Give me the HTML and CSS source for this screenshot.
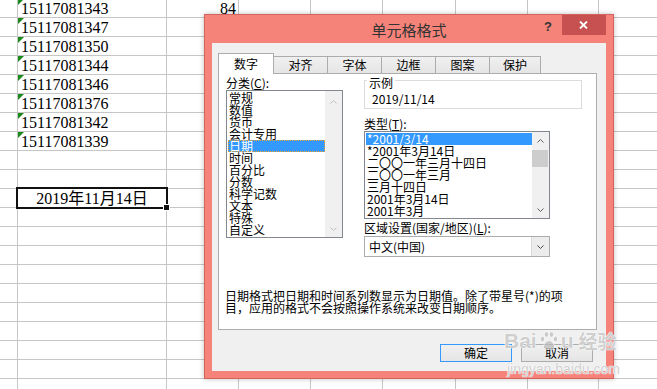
FILE: index.html
```html
<!DOCTYPE html>
<html lang="zh">
<head>
  <meta charset="UTF-8">
  <meta name="viewport" content="width=device-width, initial-scale=1.0">
  <title>单元格格式</title>
  <link rel="stylesheet" href="styles.css">
</head>
<body>
  <div class="sheet" id="sheet"></div>

  <div class="dialog">
    <div class="titlebar">
      <span></span>
      <div class="title">单元格格式</div>
      <div class="title-btns">
        <span class="help">?</span>
        <span class="close">
          <svg width="9" height="8" viewBox="0 0 9 8"><path d="M1 0.5L8 7.5M8 0.5L1 7.5" stroke="#fff" stroke-width="1.8"/></svg>
        </span>
      </div>
    </div>

    <div class="client">
      <div class="tabs">
        <div class="tab active">数字</div>
        <div class="tab">对齐</div>
        <div class="tab">字体</div>
        <div class="tab">边框</div>
        <div class="tab">图案</div>
        <div class="tab">保护</div>
      </div>

      <div class="pane">
        <div class="pane-body">
          <div class="col-left">
            <div class="label">分类(<u>C</u>):</div>
            <div class="listbox cat-list">
              <ul class="items">
                <li>常规</li>
                <li>数值</li>
                <li>货币</li>
                <li>会计专用</li>
                <li class="sel focus">日期</li>
                <li>时间</li>
                <li>百分比</li>
                <li>分数</li>
                <li>科学记数</li>
                <li>文本</li>
                <li>特殊</li>
                <li>自定义</li>
              </ul>
              <div class="vscroll disabled">
                <div class="sb-btn"><svg width="7" height="4" viewBox="0 0 7 4"><path d="M0.5 3.5L3.5 0.5L6.5 3.5" fill="none" stroke="currentColor"/></svg></div>
                <div class="sb-track"></div>
                <div class="sb-btn"><svg width="7" height="4" viewBox="0 0 7 4"><path d="M0.5 0.5L3.5 3.5L6.5 0.5" fill="none" stroke="currentColor"/></svg></div>
              </div>
            </div>
          </div>

          <div class="col-right">
            <div class="sample">
              <div class="legend">示例</div>
              <div class="sample-value">2019/11/14</div>
            </div>
            <div class="label gap">类型(<u>T</u>):</div>
            <div class="listbox type-list">
              <ul class="items">
                <li class="sel">*2001/3/14</li>
                <li>*2001年3月14日</li>
                <li>二〇〇一年三月十四日</li>
                <li>二〇〇一年三月</li>
                <li>三月十四日</li>
                <li>2001年3月14日</li>
                <li>2001年3月</li>
              </ul>
              <div class="vscroll">
                <div class="sb-btn"><svg width="7" height="4" viewBox="0 0 7 4"><path d="M0.5 3.5L3.5 0.5L6.5 3.5" fill="none" stroke="currentColor"/></svg></div>
                <div class="sb-thumb"></div>
                <div class="sb-track"></div>
                <div class="sb-btn"><svg width="7" height="4" viewBox="0 0 7 4"><path d="M0.5 0.5L3.5 3.5L6.5 0.5" fill="none" stroke="currentColor"/></svg></div>
              </div>
            </div>
            <div class="label small-gap">区域设置(国家/地区)(<u>L</u>):</div>
            <div class="combo">
              <span class="combo-text">中文(中国)</span>
              <span class="combo-btn"><svg width="7" height="4" viewBox="0 0 7 4"><path d="M0.5 0.5L3.5 3.5L6.5 0.5" fill="none" stroke="currentColor"/></svg></span>
            </div>
          </div>
        </div>

        <p class="desc">日期格式把日期和时间系列数显示为日期值。除了带星号(*)的项<br>目，应用的格式不会按照操作系统来改变日期顺序。</p>
      </div>

      <div class="buttons">
        <button class="btn default">确定</button>
        <button class="btn">取消</button>
      </div>
    </div>
  </div>

  <div class="watermark">
    <div class="wm-logo">Bai<svg class="paw" width="20" height="20" viewBox="0 0 20 20">
        <ellipse cx="3.5" cy="8" rx="2.2" ry="2.8"/>
        <ellipse cx="7.5" cy="3.5" rx="2.2" ry="2.8"/>
        <ellipse cx="12.5" cy="3.5" rx="2.2" ry="2.8"/>
        <ellipse cx="16.5" cy="8" rx="2.2" ry="2.8"/>
        <path d="M10 9.5C7 9.5 4 14 4.5 16.5C5 19 8 18 10 18C12 18 15 19 15.5 16.5C16 14 13 9.5 10 9.5Z"/>
      </svg>u<span class="wm-cn">经验</span></div>
    <div class="wm-url">jingyan.baidu.com</div>
  </div>

  <script>
    const phones = ['15117081343', '15117081347', '15117081350', '15117081344',
                    '15117081346', '15117081376', '15117081342', '15117081339'];
    const sheet = document.getElementById('sheet');

    for (let r = 0; r < 21; r++) {
      for (let c = 0; c < 9; c++) {
        const cell = document.createElement('div');
        cell.className = 'cell';
        if (c === 1 && r < phones.length) {
          cell.classList.add('text');
          cell.textContent = phones[r];
        }
        if (c === 2 && r === 0) {
          cell.classList.add('num');
          cell.textContent = '84';
        }
        if (c === 1 && r === 10) {
          cell.classList.add('selected');
          cell.textContent = '2019年11月14日';
        }
        sheet.appendChild(cell);
      }
    }
  </script>
</body>
</html>
```

FILE: styles.css
```css
body {
  margin: 0;
  width: 657px;
  height: 389px;
  overflow: hidden;
  position: relative;
  background: #fff;
  font-family: 'Liberation Serif', 'Noto Sans CJK SC', serif;
  color: #000;
}

/* spreadsheet */
.sheet {
  display: grid;
  grid-template-columns: 18px 149px 72px 72px 72px 73px 72px 71px 72px;
  grid-auto-rows: 19px;
  margin-top: -1px;
}
.cell {
  box-sizing: border-box;
  border-right: 1px solid #c6c6c6;
  border-bottom: 1px solid #c6c6c6;
  font-size: 16px;
  line-height: 19px;
  padding: 0 3px;
  white-space: nowrap;
  position: relative;
}
.cell.text::before {
  content: '';
  position: absolute;
  left: 0;
  top: 0;
  border-top: 6px solid #1a8a1a;
  border-right: 6px solid transparent;
}
.cell.num {
  text-align: right;
  padding-right: 2px;
}
.cell.selected {
  text-align: center;
  z-index: 1;
}
.cell.selected::after {
  content: '';
  position: absolute;
  inset: -2px;
  border: 2px solid #111;
}
.cell.selected::before {
  content: '';
  position: absolute;
  right: -4px;
  bottom: -4px;
  width: 5px;
  height: 5px;
  background: #111;
  border: 1px solid #fff;
  z-index: 2;
}

/* dialog */
.dialog {
  position: absolute;
  left: 204px;
  top: 14px;
  width: 410px;
  height: 365px;
  box-sizing: border-box;
  border: 1px solid #d4645b;
  background: #f5837a;
  padding: 0 7px 7px 7px;
  display: flex;
  flex-direction: column;
  box-shadow: 0 0 5px rgba(0,0,0,0.25);
  font-family: 'Noto Sans CJK SC', 'Liberation Sans', sans-serif;
  font-size: 12px;
  z-index: 3;
}
.titlebar {
  height: 28px;
  display: grid;
  grid-template-columns: 62px 1fr 62px;
}
.title {
  text-align: center;
  font-size: 15px;
  line-height: 29px;
  color: #333;
}
.title-btns {
  display: flex;
  justify-content: flex-end;
  align-items: flex-start;
}
.help {
  font-family: 'Liberation Sans', sans-serif;
  font-weight: bold;
  font-size: 13px;
  line-height: 24px;
  color: #333;
  margin-right: 10px;
}
.close {
  width: 45px;
  height: 20px;
  background: #c75050;
  display: flex;
  align-items: center;
  justify-content: center;
}

.client {
  flex: 1;
  background: #f0f0f0;
  padding: 10px 9px 0 6px;
  display: flex;
  flex-direction: column;
}

.tabs {
  display: flex;
  align-items: flex-end;
  height: 20px;
  position: relative;
  z-index: 1;
}
.tab {
  box-sizing: border-box;
  width: 55px;
  height: 17px;
  margin-left: -1px;
  border: 1px solid #acacac;
  border-bottom: none;
  background: linear-gradient(#f0f0f0, #e5e5e5);
  text-align: center;
  line-height: 16px;
}
.tab.active {
  width: 56px;
  height: 21px;
  margin-left: 0;
  margin-bottom: -1px;
  background: #fff;
  line-height: 20px;
}
.tab:last-child {
  width: 52px;
}

.pane {
  box-sizing: border-box;
  height: 257px;
  border: 1px solid #adadad;
  background: #fff;
  padding: 1px 0 0 7px;
  display: flex;
  flex-direction: column;
}
.pane-body {
  display: grid;
  grid-template-columns: 117px 218px;
  column-gap: 21px;
}
.label {
  line-height: 15px;
  white-space: nowrap;
}
.label.gap {
  margin-top: 7px;
}
.label.small-gap {
  margin-top: 1px;
}

.listbox {
  box-sizing: border-box;
  border: 1px solid #828790;
  background: #fff;
  display: flex;
}
.cat-list {
  height: 148px;
}
.type-list {
  width: 186px;
  height: 88px;
}
.items {
  flex: 1;
  list-style: none;
  margin: 0;
  padding: 1px 0 0 1px;
}
.items li {
  line-height: 12px;
  height: 12px;
  padding-left: 1px;
  white-space: nowrap;
}
.items li.sel {
  background: #3399ff;
  color: #fff;
}
.items li.focus {
  outline: 1px dotted #f0a030;
  outline-offset: -1px;
}

.vscroll {
  width: 17px;
  background: #f0f0f0;
  display: flex;
  flex-direction: column;
  color: #606060;
}
.vscroll.disabled {
  color: #c2c2c2;
}
.sb-btn {
  height: 17px;
  display: flex;
  align-items: center;
  justify-content: center;
}
.cat-list .sb-btn:first-child {
  align-items: flex-end;
  height: 13px;
}
.sb-thumb {
  height: 17px;
  margin: 1px 1px 0 0;
  background: #cdcdcd;
}
.sb-track {
  flex: 1;
}

.sample {
  box-sizing: border-box;
  margin-top: 5px;
  height: 29px;
  border: 1px solid #dcdcdc;
  padding: 0 7px;
}
.legend {
  width: max-content;
  margin: -5px 0 0 -5px;
  padding: 0 2px;
  background: #fff;
  line-height: 13px;
}
.sample-value {
  line-height: 13px;
  margin-top: 3px;
}

.combo {
  box-sizing: border-box;
  margin-top: 1px;
  width: 186px;
  height: 21px;
  border: 1px solid #acacac;
  background: #fff;
  display: flex;
}
.combo-text {
  flex: 1;
  padding-left: 4px;
  line-height: 19px;
}
.combo-btn {
  width: 17px;
  border-left: 1px solid #d9d9d9;
  background: #ececec;
  display: flex;
  align-items: center;
  justify-content: center;
  color: #444;
}

.desc {
  margin: auto 0 15px -1px;
  line-height: 12px;
  white-space: nowrap;
}

.buttons {
  display: flex;
  justify-content: flex-end;
  gap: 9px;
  margin: 14px 4px 0 0;
}
.btn {
  box-sizing: border-box;
  width: 72px;
  height: 18px;
  padding: 0;
  border: 1px solid #acacac;
  background: linear-gradient(#f0f0f0, #e5e5e5);
  font-family: inherit;
  font-size: 12px;
  line-height: 16px;
  color: #000;
}
.btn.default {
  border-color: #3399ff;
}

/* watermark */
.watermark {
  position: absolute;
  left: 504px;
  top: 329px;
  z-index: 5;
  color: rgba(185,185,185,0.7);
  text-shadow: 0 0 1px #fff, 0 0 1px #fff, 0 0 1px #fff;
  pointer-events: none;
}
.wm-logo {
  font-family: 'Liberation Sans', sans-serif;
  font-weight: bold;
  font-size: 21px;
  line-height: 24px;
  display: flex;
  align-items: center;
  white-space: nowrap;
}
.paw {
  fill: rgba(185,185,185,0.7);
  stroke: rgba(255,255,255,0.9);
  stroke-width: 0.8;
  margin: 0 2px;
}
.wm-cn {
  font-family: 'Noto Sans CJK SC', sans-serif;
  font-size: 19px;
  margin-left: 5px;
}
.wm-url {
  font-family: 'Liberation Sans', sans-serif;
  font-size: 14px;
  line-height: 16px;
  margin-top: 8px;
  margin-left: 3px;
}
```
